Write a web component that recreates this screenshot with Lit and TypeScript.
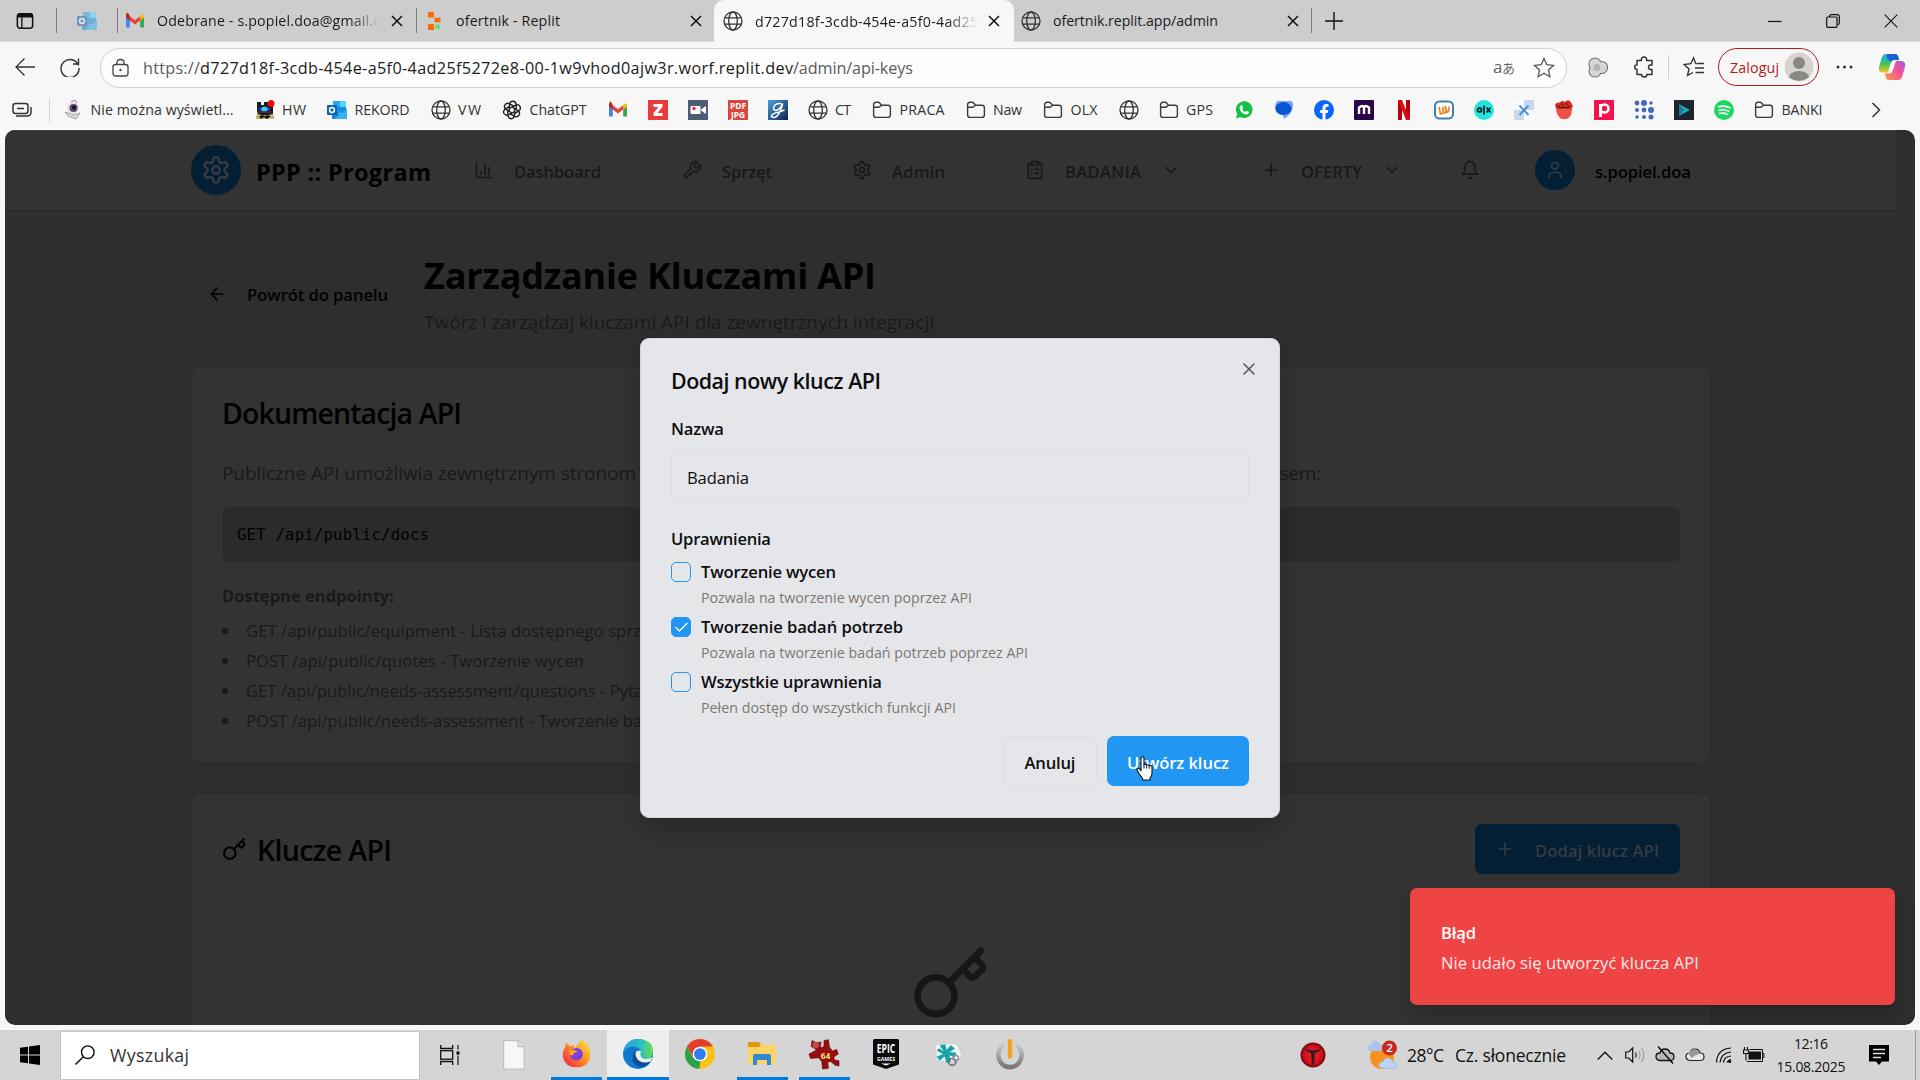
import { LitElement, html, css, svg, nothing } from "lit";
import { customElement, property } from "lit/decorators.js";

/* Single-line label whose tracking is adjusted so that it fills a given width. */
@customElement("fit-text")
class FitText extends LitElement {
  @property() t = "";
  @property({ type: Number }) w = 0;
  static styles = css`
    :host { display: inline-block; white-space: pre; flex: none; }
  `;
  render() {
    return html`<span>${this.t}</span>`;
  }
  updated() {
    this.style.width = `${this.w}px`;
    this.style.letterSpacing = "0px";
    const span = this.renderRoot.querySelector("span")!;
    const natural = span.getBoundingClientRect().width;
    const n = Math.max(1, this.t.length - 1);
    this.style.letterSpacing = `${((this.w - natural) / n).toFixed(4)}px`;
  }
}

const T = (t: string, w: number, cls = "") =>
  html`<fit-text class=${cls} .t=${t} .w=${w}></fit-text>`;

const line = (inner: unknown, size = 20, sw = 2) => html`
  <svg class="ic" width=${size} height=${size} viewBox="0 0 24 24" fill="none" stroke="currentColor"
    stroke-width=${sw} stroke-linecap="round" stroke-linejoin="round">${inner}</svg>`;
const pic = (inner: unknown, w = 20, h = w) => html`
  <svg class="ic" width=${w} height=${h} viewBox="0 0 20 20" preserveAspectRatio="none">${inner}</svg>`;

const P = {
  settings: svg`<path d="M12.22 2h-.44a2 2 0 0 0-2 2v.18a2 2 0 0 1-1 1.73l-.43.25a2 2 0 0 1-2 0l-.15-.08a2 2 0 0 0-2.73.73l-.22.38a2 2 0 0 0 .73 2.73l.15.1a2 2 0 0 1 1 1.72v.51a2 2 0 0 1-1 1.74l-.15.09a2 2 0 0 0-.73 2.73l.22.38a2 2 0 0 0 2.73.73l.15-.08a2 2 0 0 1 2 0l.43.25a2 2 0 0 1 1 1.73V20a2 2 0 0 0 2 2h.44a2 2 0 0 0 2-2v-.18a2 2 0 0 1 1-1.73l.43-.25a2 2 0 0 1 2 0l.15.08a2 2 0 0 0 2.73-.73l.22-.39a2 2 0 0 0-.73-2.73l-.15-.08a2 2 0 0 1-1-1.74v-.5a2 2 0 0 1 1-1.74l.15-.09a2 2 0 0 0 .73-2.73l-.22-.38a2 2 0 0 0-2.73-.73l-.15.08a2 2 0 0 1-2 0l-.43-.25a2 2 0 0 1-1-1.73V4a2 2 0 0 0-2-2z"/><circle cx="12" cy="12" r="3"/>`,
  chart: svg`<path d="M3 3v16a2 2 0 0 0 2 2h16M18 17V9M13 17V5M8 17v-3"/>`,
  wrench: svg`<path d="M14.7 6.3a1 1 0 0 0 0 1.4l1.6 1.6a1 1 0 0 0 1.4 0l3.77-3.77a6 6 0 0 1-7.94 7.94l-6.91 6.91a2.12 2.12 0 0 1-3-3l6.91-6.91a6 6 0 0 1 7.94-7.94l-3.76 3.76z"/>`,
  clip: svg`<rect x="8" y="2" width="8" height="4" rx="1"/><path d="M16 4h2a2 2 0 0 1 2 2v14a2 2 0 0 1-2 2H6a2 2 0 0 1-2-2V6a2 2 0 0 1 2-2h2M12 11h4M12 16h4M8 11h.01M8 16h.01"/>`,
  down: svg`<path d="m6 9 6 6 6-6"/>`,
  plus: svg`<path d="M5 12h14M12 5v14"/>`,
  bell: svg`<path d="M6 8a6 6 0 0 1 12 0c0 7 3 9 3 9H3s3-2 3-9M10.3 21a1.94 1.94 0 0 0 3.4 0"/>`,
  user: svg`<path d="M19 21v-2a4 4 0 0 0-4-4H9a4 4 0 0 0-4 4v2"/><circle cx="12" cy="7" r="4"/>`,
  back: svg`<path d="m12 19-7-7 7-7M19 12H5"/>`,
  key: svg`<path d="m15.5 7.5 2.3 2.3a1 1 0 0 0 1.4 0l2.1-2.1a1 1 0 0 0 0-1.4L19 4M21 2l-9.6 9.6"/><circle cx="7.5" cy="15.5" r="5.5"/>`,
  x: svg`<path d="M18 6 6 18M6 6l12 12"/>`,
  check: svg`<path d="M20 6 9 17l-5-5"/>`,
};

const globe = pic(svg`<g fill="none" stroke="#333" stroke-width="1.3"><circle cx="10" cy="10" r="9"/><ellipse cx="10" cy="10" rx="4.3" ry="9"/><path d="M1.8 6.8h16.4M1.8 13.2h16.4"/></g>`);
const folder = pic(svg`<path d="M1.6 5V15q0 2.4 2.4 2.4h12q2.4 0 2.4-2.4V7.600q0-2.400-2.400-2.400H9.600L7.600 3Q7 2.300 6 2.300H4Q1.600 2.300 1.600 5zM1.800 7.200H6.300Q7.300 7.200 8 6.500L9.500 5.200" fill="none" stroke="#3b3b3b" stroke-width="1.4"/>`);
const gmail = pic(svg`<path d="M1 4v12.500h3.800V8z" fill="#4285f4"/><path d="M15.200 8v8.500H19V4z" fill="#34a853"/><path d="M15.200 5.200V9.500L19 6.500V4.500q-1-2.500-3.800.7z" fill="#fbbc04"/><path d="M4.800 5.200V9.500L10 13.500l5.200-4V5.200L10 9.200z" fill="#ea4335"/><path d="M1 4.500v2l3.800 3V5.200Q2-2 1 4.500z" fill="#c5221f"/>`);
const outlook = pic(svg`<rect x="6" y="1" width="13" height="12" rx="1" fill="#1490df"/><rect x="12.500" y="1" width="6.500" height="6" fill="#50d9ff"/><rect x="6" y="1" width="6.500" height="6" fill="#28a8ea"/><path d="M5 9l8 5 7-5v9q0 1-1 1H6q-1 0-1-1z" fill="#1b7fd6"/><path d="M20 9v9q0 1-1 1H7z" fill="#37b4f0"/><rect x="0" y="5" width="10" height="10" rx="1" fill="#0a64b8"/><circle cx="5" cy="10" r="2.400" fill="none" stroke="#fff" stroke-width="1.500"/>`);
const word = (s: string, x: number, y: number, fs: number, fill: string, fw = 700) =>
  svg`<text x=${x} y=${y} font-size=${fs} fill=${fill} font-weight=${fw} text-anchor="middle" font-family="Open Sans, sans-serif">${s}</text>`;

const I = {
  camera: pic(svg`<path d="M2 12l9 3 6-2-4 6-8-3z" fill="#ddd" stroke="#888" stroke-width=".7"/><circle cx="10" cy="8" r="6" fill="#e4dfe6"/><circle cx="10.500" cy="8" r="4" fill="#5b4a66"/><circle cx="11" cy="7.500" r="2" fill="#1c1224"/><path d="M8 2l4-2 2 3" stroke="#d04f9a" fill="none"/>`),
  hw: pic(svg`<path d="M2 2h4v3h3V2h4v3h5v8l-1 3H3L2 11z" fill="#171c20"/><path d="M1 16l3-2 3 2 3-1 3 1 3-2 3 2v3H1z" fill="#c9b36a"/><path d="M4 16l2 3 3-2 3 2 4-3z" fill="#111"/><ellipse cx="9.500" cy="9" rx="6" ry="2" fill="#2c3bd0"/><ellipse cx="9.500" cy="9" rx="3" ry="2.500" fill="#26d5e8"/><path d="M3 12h13" stroke="#8a2a5b"/><circle cx="16" cy="3.500" r="3.500" fill="#fb0707"/>`),
  gpt: pic(svg`<g fill="none" stroke="#222" stroke-width="1.400">${[0, 60, 120, 180, 240, 300].map((a) => svg`<path transform="rotate(${a} 10 10)" d="M10 7l3-1.700q3.500-1.500 5 1.200 1.200 2.600-1 4.300L12.600 13.400V8.500"/>`)}</g>`),
  z: pic(svg`<rect width="20" height="20" fill="#e93a3c"/><path d="M5.500 4h9v3l-5 6h5v3h-9v-3l5-6h-5z" fill="#fff"/>`),
  cam: pic(svg`<rect width="20" height="20" fill="#4d5a78"/><rect x="2.500" y="6" width="10" height="8" rx="1" fill="#fff"/><path d="M13 9.500l5-3.500v8l-5-3.500z" fill="#fff"/><circle cx="6" cy="8.500" r="1.800" fill="#e33"/>`),
  pdf: pic(svg`<rect width="20" height="20" fill="#d8463c"/>${word("PDF", 10, 8.6, 8.4, "#fff")}${word("JPG", 10, 18, 8.4, "#fff")}`),
  g: pic(svg`<defs><linearGradient id="gg" x2="1" y2="1"><stop stop-color="#4ba0e0"/><stop offset="1" stop-color="#0c2350"/></linearGradient></defs><rect width="20" height="20" fill="url(#gg)"/><path d="M15 4.500Q10 2 6.500 5.500q-2.500 5 1.500 5Q12 9.500 14.500 4q-2 9-6 12.500-3 2-5 0 0-3 7.500-4.500l5.500-2" fill="none" stroke="#fff" stroke-width="1.600"/>`),
  wa: pic(svg`<path d="M2 18.500l1.200-4.500A8.300 8.300 0 1 1 6.500 17z" fill="#12c143"/><path d="M6.500 5.500l1.500-.5 1.200 2.800-1 1.200q1 2.300 3.200 3l1.200-1.200 2.400 1.300q0 2.400-2.600 2.400-6.400-1-6.900-7z" fill="#fff"/>`),
  msg: pic(svg`<path d="M4 1h13q2.500 1 2 5-.5 8-9 13-1-3-1.500-4Q1 14 1 7 1 2 4 1z" fill="#7aa2f7"/><ellipse cx="9.500" cy="8.500" rx="8" ry="6.500" fill="#0957d0"/>`),
  fb: pic(svg`<circle cx="10" cy="10" r="10" fill="#0866ff"/><path d="M8.500 20v-7H6.200v-3h2.300V8Q8.500 4 12.500 4h2v2.800H13q-1.500 0-1.500 1.500V10h2.800l-.5 3h-2.300v7z" fill="#fff"/>`),
  m: pic(svg`<rect width="20" height="20" rx="1" fill="#2b0548"/><path d="M5 14V7.500Q10 4 10 9v5M10 9q0-5 5-1.500V14" fill="none" stroke="#fff" stroke-width="2.400"/>`),
  n: pic(svg`<path d="M4 0h4v20H4zM12 0h4v20h-4z" fill="#b1060f"/><path d="M4 0h4l8 20h-4z" fill="#e50914"/>`),
  w: pic(svg`<rect x="1" y="1.500" width="18" height="17" rx="4.500" fill="#fff" stroke="#3f7fb2" stroke-width="2"/><path d="M5 7l1.500 7 3-1-1-6 1.200 6 3-1L11 6l1.500 6.500q3-1 2.500-6" fill="none" stroke="#f0811e" stroke-width="1.700"/>`),
  olx: pic(svg`<circle cx="10" cy="10" r="10" fill="#23e5db"/><circle cx="5.500" cy="10" r="2" fill="none" stroke="#012a30" stroke-width="1.800"/><path d="M10 5.500v9M12.500 7.500l4 5M16.500 7.500l-4 5" stroke="#012a30" stroke-width="1.800"/>`),
  xx: pic(svg`<rect width="20" height="20" fill="#fff"/><path d="M0 0h10v10H0zM10 10h10v10H10z" fill="#f9fbff"/><path d="M10 0h10v10H10zM0 10h10v10H0z" fill="#c8d8ec"/><path d="M5.500 5.500l9 9.500M14.500 5.500l-9 9.500" stroke="#4b8fe0" stroke-width="2"/>`),
  fruit: pic(svg`<path d="M1 6q0-4 5-3.500 2-2.500 5-.5 2-3 5-1l3 5-2 4H3z" fill="#d52d1d"/><path d="M2 9h16q0 8-5.500 10H8Q3 17 2 9z" fill="#ef5045"/><path d="M4 6q3 3 6 1 3 2 6-1M7 3.500l2 2M12 3l1 2" stroke="#471a10" stroke-width="1.100" fill="none"/>`),
  p: pic(svg`<rect width="20" height="20" fill="#f7104f"/><path d="M6.500 17V4" stroke="#fff" stroke-width="3"/><circle cx="10.500" cy="8.500" r="4" fill="none" stroke="#fff" stroke-width="2.600"/>`),
  dots: pic(svg`<g fill="#4666bd">${[[3, 3, 2.4], [10, 3, 3], [17, 3, 1.7], [3, 10, 2], [10, 10, 2.4], [17, 10, 3], [3, 17, 1.7], [10, 17, 2], [17, 17, 2.5]].map(([x, y, r]) => svg`<circle cx=${x} cy=${y} r=${r}/>`)}</g>`),
  play: pic(svg`<rect width="20" height="20" fill="#1f242a"/><path d="M5 4v12l11-6z" fill="#1fa7c4"/><path d="M5 4v12l5-6z" fill="#177a98"/>`),
  sp: pic(svg`<circle cx="10" cy="10" r="10" fill="#1ed760"/><path d="M4.500 6.800q6-1.800 11.500 1M5 10.300q5-1.400 9.800 1M5.500 13.500q4.500-1 8 1" stroke="#fff" stroke-width="1.600" fill="none" stroke-linecap="round"/>`),
};

const marks: [unknown, string?, number?][] = [
  [I.camera, "Nie można wyświetl...", 143], [I.hw, "HW", 24], [outlook, "REKORD", 55], [globe, "VW", 23],
  [I.gpt, "ChatGPT", 57], [gmail], [I.z], [I.cam], [I.pdf], [I.g], [globe, "CT", 16], [folder, "PRACA", 45],
  [folder, "Naw", 29], [folder, "OLX", 27], [globe], [folder, "GPS", 27], [I.wa], [I.msg], [I.fb], [I.m], [I.n], [I.w],
  [I.olx], [I.xx], [I.fruit], [I.p], [I.dots], [I.play], [I.sp], [folder, "BANKI", 41],
];

const tabX = html`<svg class="ic" width="12" height="12" viewBox="0 0 12 12"><path d="M1 1l10 10M11 1L1 11" stroke="#111" stroke-width="1.500"/></svg>`;

@customElement("browser-chrome")
class BrowserChrome extends LitElement {
  static styles = css`
    :host { display: block; height: 130px; background: #f7f7f7; color: #1b1b1b; }
    .ic { display: block; flex: none; }
    .tabs { height: 42px; background: #cdcdcd; display: flex; align-items: center; font-size: 14.200px; border-bottom: 1px solid #dedede; box-sizing: border-box; }
    .tabs > * { flex: none; }
    .tabs fit-text { margin-top: -3px; }
    .vs { width: 1px; height: 25px; background: #7d7d7d; }
    .lead { width: 56px; display: flex; padding-left: 16px; box-sizing: border-box; }
    .pin { width: 60px; display: flex; justify-content: center; opacity: .5; }
    .tab { display: flex; align-items: center; box-sizing: border-box; height: 42px; }
    .t1 { width: 298px; padding-left: 7px; }
    .t2 { width: 297px; padding-left: 7px; }
    .t3 { width: 300px; padding-left: 9px; background: #f7f7f7; border-radius: 10px 10px 0 0; margin-bottom: -1px; }
    .t4 { width: 297px; padding-left: 7px; }
    .lbl { display: block; margin-left: 12px; overflow: hidden; }
    .fade { -webkit-mask-image: linear-gradient(90deg, #000 86%, transparent 100%); }
    .sp { flex: 1; }
    .plus { margin-left: 13px; }
    .wins { display: flex; margin-left: auto; gap: 44px; padding-right: 22px; align-items: center; }
    .bar { height: 50px; display: flex; align-items: center; }
    .bar > * { flex: none; }
    .nav { display: flex; gap: 25px; padding-left: 15px; width: 100px; box-sizing: border-box; align-items: center; }
    .addr { width: 1467px; height: 40px; box-sizing: border-box; border: 1px solid #cfcfcf; border-radius: 20px; background: #fdfdfd; display: flex; align-items: center; padding: 0 11px 0 11px; font-size: 16.200px; color: #5b5b5b; margin-top: 1px; }
    .url { display: flex; margin-left: 14px; }
    .host { color: #1b1b1b; }
    .tr { margin-left: auto; margin-right: 18px; font: 17px "Open Sans", "Noto Sans CJK JP", sans-serif; letter-spacing: -.5px; color: #666; width: 22px; white-space: nowrap; display: flex; align-items: center; line-height: 20px; padding-bottom: 2px; }
    .jp { font-size: 13px; padding-top: 2px; }
    .login { width: 101px; height: 38px; box-sizing: border-box; border: 1.500px solid #b3191d; border-radius: 20px; display: flex; align-items: center; justify-content: space-between; padding: 0 4px 0 11px; color: #b3191d; font-size: 14.200px; margin-left: 14px; }
    .vsep { width: 1px; height: 24px; background: #cfcfcf; }
    .marks { height: 38px; display: flex; align-items: center; font-size: 14.200px; color: #333; padding-left: 12px; padding-bottom: 2px; box-sizing: border-box; }
    .list { display: flex; gap: 20px; margin-left: 13px; }
    .mk { display: flex; align-items: center; gap: 7.500px; height: 22px; }
    .mk fit-text { margin-right: 1px; padding-bottom: 1px; }
    .msep { width: 1px; height: 24px; background: #d2d2d2; margin-left: 17px; }
    .more { margin-left: 47px; }
  `;
  render() {
    return html`
      <div class="tabs">
        <div class="lead">${pic(svg`<rect x="1.500" y="2" width="17" height="16" rx="3" fill="none" stroke="#111" stroke-width="1.700"/><path d="M1.500 6V4q0-2.500 2.500-2.500h12q2.500 0 2.500 2.500v2z" fill="#111"/><path d="M6.500 6v12" stroke="#111" stroke-width="1.500"/>`, 18)}</div>
        <div class="vs"></div>
        <div class="pin">${outlook}</div>
        <div class="vs"></div>
        <div class="tab t1">${gmail}<div class="lbl fade">${T("Odebrane - s.popiel.doa@gmail.c", 223)}</div><div class="sp"></div>${tabX}<svg class="ic" width="13" height="1"></svg></div>
        <div class="vs"></div>
        <div class="tab t2">${pic(svg`<path d="M4 1h6v5.500H4zM4 13h6v6H4z" fill="#fb6a0a"/><path d="M10.500 6.800h6v4.500h-6z" fill="#fb6a0a"/><circle cx="13.500" cy="15.500" r="2.600" fill="#67dd7c"/>`, 20)}<div class="lbl">${T("ofertnik - Replit", 104)}</div><div class="sp"></div>${tabX}<svg class="ic" width="12" height="1"></svg></div>
        <div class="tab t3">${globe}<div class="lbl fade">${T("d727d18f-3cdb-454e-a5f0-4ad25", 223)}</div><div class="sp"></div>${tabX}<svg class="ic" width="14" height="1"></svg></div>
        <div class="tab t4">${globe}<div class="lbl">${T("ofertnik.replit.app/admin", 165)}</div><div class="sp"></div>${tabX}<svg class="ic" width="12" height="1"></svg></div>
        <div class="vs"></div>
        <svg class="ic plus" width="18" height="18" viewBox="0 0 18 18"><path d="M9 0v18M0 9h18" stroke="#111" stroke-width="1.400"/></svg>
        <div class="wins">
          <svg class="ic" width="14" height="14" viewBox="0 0 14 14"><path d="M0 7.500h13.500" stroke="#111" stroke-width="1.200"/></svg>
          <svg class="ic" width="14" height="14" viewBox="0 0 14 14"><path d="M3.500 3V2.500Q3.500.7 5.500.7H11q2.300 0 2.300 2.300v6q0 1.500-1.500 1.700" fill="none" stroke="#111" stroke-width="1.200"/><rect x=".7" y="3" width="10.300" height="10.300" rx="1" fill="none" stroke="#111" stroke-width="1.200"/></svg>
          <svg class="ic" width="14" height="14" viewBox="0 0 14 14"><path d="M.7.700l12.600 12.600M13.300.700L.7 13.300" stroke="#111" stroke-width="1.100"/></svg>
        </div>
      </div>
      <div class="bar">
        <div class="nav">
          <svg class="ic" width="20" height="20" viewBox="0 0 20 20"><path d="M9.500 1.500L1 10l8.500 8.500M1 10h19" stroke="#333" stroke-width="1.300" fill="none"/></svg>
          <svg class="ic" width="20" height="20" viewBox="0 0 20 20"><path d="M18.500 8.500A9 9 0 1 0 19 11M18.500 1.500V7H13" stroke="#333" stroke-width="1.400" fill="none"/></svg>
        </div>
        <div class="addr">
          <svg class="ic" width="17" height="20" viewBox="0 0 17 20"><rect x="1" y="6.500" width="15" height="11.500" rx="2.500" fill="none" stroke="#444" stroke-width="1.300"/><path d="M5 6.500V4.500Q5 1.500 8.500 1.500T12 4.500v2" fill="none" stroke="#444" stroke-width="1.300"/><circle cx="8.500" cy="12" r="1.200" fill="#444"/></svg>
          <div class="url">${T("https://", 57)}${T("d727d18f-3cdb-454e-a5f0-4ad25f5272e8-00-1w9vhod0ajw3r.worf.replit.dev", 593, "host")}${T("/admin/api-keys", 120)}</div>
          <div class="tr">a<span class="jp">あ</span></div>
          <svg class="ic" width="22" height="22" viewBox="0 0 22 22"><path d="M11 1.500l2.800 6.200 6.700.7-5 4.600 1.400 6.700L11 16.300l-5.900 3.400L6.500 13l-5-4.600 6.700-.7z" fill="none" stroke="#555" stroke-width="1.300"/></svg>
        </div>
        <svg class="ic" width="21" height="1"></svg>
        <svg class="ic" width="20" height="21" viewBox="0 0 20 21"><g fill="#c4c4c4" stroke="#777" stroke-width="2.200"><circle cx="7" cy="7" r="5.500"/><circle cx="7" cy="14" r="5.500"/><circle cx="13.500" cy="10.500" r="5.500"/></g><g fill="#d6d6d6"><circle cx="7" cy="7" r="5.500"/><circle cx="7" cy="14" r="5.500"/><circle cx="13.500" cy="10.500" r="5.500"/></g><circle cx="9" cy="10.500" r="3.500" fill="#b4b4b4"/></svg>
        <svg class="ic" width="26" height="1"></svg>
        <svg class="ic" width="21" height="22" viewBox="0 0 21 22"><path d="M3 4.500h4.500Q7 1 10 1t2.600 3.500H18V9q-3.500-.6-3.500 2.200T18 13.500V18.500h-5.300Q13 21 10.300 21T7.600 18.500H3v-5Q.7 13.500.7 11T3 9z" fill="none" stroke="#333" stroke-width="1.500" stroke-linejoin="round"/></svg>
        <svg class="ic" width="13" height="1"></svg>
        <div class="vsep"></div>
        <svg class="ic" width="14" height="1"></svg>
        <svg class="ic" width="21" height="22" viewBox="0 0 21 22"><path d="M13 8l-2.500-6L7.800 7.700 1 8.500l5 4.600L4.500 19.500l5.500-3" fill="none" stroke="#333" stroke-width="1.400"/><path d="M13.500 7.500H21M12 12h9M12.500 16.500H21" stroke="#333" stroke-width="1.400"/></svg>
        <div class="login">${T("Zaloguj", 49)}<svg class="ic" width="30" height="30" viewBox="0 0 30 30"><circle cx="15" cy="15" r="14.500" fill="#d6d4d1"/><circle cx="15" cy="11" r="6" fill="#8b8783"/><path d="M5 25.500Q6 19 15 19t10 6.500Q15 32 5 25.500z" fill="#8b8783"/></svg></div>
        <svg class="ic" width="17" height="1"></svg>
        <svg class="ic" width="17" height="4" viewBox="0 0 17 4"><g fill="#333"><circle cx="2" cy="2" r="1.500"/><circle cx="8.500" cy="2" r="1.500"/><circle cx="15" cy="2" r="1.500"/></g></svg>
        <svg class="ic" width="25" height="1"></svg>
        <svg class="ic" width="28" height="28" viewBox="0 0 28 28">
          <defs><linearGradient id="ca" x2="0" y2="1"><stop stop-color="#1bb0e8"/><stop offset=".5" stop-color="#3bbf6b"/><stop offset="1" stop-color="#f8c817"/></linearGradient>
          <linearGradient id="cb" x1="1" x2="0" y2="1"><stop stop-color="#a955e8"/><stop offset=".5" stop-color="#f4578f"/><stop offset="1" stop-color="#ff9d3c"/></linearGradient></defs>
          <path d="M8 1h9q2.500 0 3.300 3L21 7h-5q-2.500 0-3.300 3L10 19.500H4.500Q0 19.500 1 14L4 4Q5 1 8 1z" fill="url(#ca)"/>
          <path d="M9 1h8q2.500 0 3.300 3L21 7h-5q-2 0-3 2L9 5z" fill="#1a5fd8"/>
          <path d="M20 27h-9q-2.500 0-3.300-3L7 20.500h4.500q2.500 0 3.300-3L18 8h5.500Q28 8 27 14L24 24q-1 3-4 3z" fill="url(#cb)"/>
        </svg>
      </div>
      <div class="marks">
        <svg class="ic" width="20" height="16" viewBox="0 0 20 16"><rect x="1" y="1.500" width="15" height="10" rx="2.500" fill="none" stroke="#333" stroke-width="1.500"/><path d="M5 6.500h7M4 14h11q4 0 4-4V5" stroke="#333" stroke-width="1.500" fill="none"/></svg>
        <div class="msep"></div>
        <div class="list">${marks.map(([i, t, w]) => html`<div class="mk">${i}${t ? T(t, w!) : nothing}</div>`)}</div>
        <svg class="ic more" width="10" height="16" viewBox="0 0 10 16"><path d="M1.500 1l7 7-7 7" fill="none" stroke="#333" stroke-width="1.500"/></svg>
      </div>`;
  }
}

@customElement("admin-page")
class AdminPage extends LitElement {
  static styles = css`
    :host { display: block; position: relative; margin: 0 5px; height: 895px; background: #2e2e2e; border-radius: 10px; overflow: hidden; color: #010101; font-size: 16.600px; }
    .ic { display: block; flex: none; }
    header { width: 1891px; height: 81px; box-sizing: border-box; background: #333; border-bottom: 1px solid #292929; border-top: 1px solid #444; display: flex; align-items: center; padding: 0 0 1px 186px; color: #191817; }
    header > * { flex: none; }
    .disc { border-radius: 50%; background: #041e33; color: #333c44; display: grid; place-items: center; }
    .logo { width: 50px; height: 50px; }
    .ava { width: 40px; height: 40px; margin-left: 55px; }
    .brand { font-size: 23.500px; font-weight: 700; margin: 4px 43px 0 15px; color: #010101; }
    .nav { display: flex; align-items: center; gap: 20px; margin-right: 80px; font-weight: 600; }
    .nav fit-text, .who { padding-top: 3px; }
    .n1 { margin-right: 81px; }
    .last { margin-right: 58px; }
    .who { margin-left: 20px; color: #010101; font-weight: 600; }
    .head { display: flex; padding: 40px 0 0 201px; height: 155px; box-sizing: border-box; }
    .ret { display: flex; align-items: center; gap: 20px; height: 86px; font-weight: 600; width: 218px; }
    .ret .ic { margin-left: 1px; }
    h1 { margin: 0; font-size: 36px; line-height: 50px; font-weight: 700; }
    .sub { margin-top: 1px; font-size: 19px; line-height: 40px; color: #1b1918; }
    .ret + div { display: flex; flex-direction: column; }
    .card { margin-left: 186px; width: 1520px; box-sizing: border-box; border: 1px solid #2b2b2b; border-radius: 10px; background: #333; padding: 0 30px; }
    .c1 { height: 397px; padding-top: 26px; color: #1b1918; }
    .c2 { height: 300px; margin-top: 30px; padding-top: 30px; }
    h2 { margin: 0; font-size: 28.500px; line-height: 40px; font-weight: 600; color: #010101; }
    .kt h2 { padding-top: 1px; }
    .para { display: flex; margin-top: 25px; font-size: 19px; line-height: 30px; height: 30px; justify-content: space-between; padding-right: 359px; }
    .code { margin-top: 19px; height: 55px; border-radius: 8px; background: #292b2d; color: #010101; font: 15.800px/55px "DejaVu Sans Mono", monospace; padding-left: 15px; }
    .b { margin-top: 19px; line-height: 30px; height: 30px; font-weight: 700; }
    .eps { margin-top: 5px; }
    .ep { display: flex; align-items: center; height: 30px; line-height: 30px; width: 440px; white-space: pre; }
    .dot { width: 6px; height: 6px; border-radius: 50%; background: #1b1918; margin-right: 18px; flex: none; }
    .row { display: flex; justify-content: space-between; align-items: center; height: 50px; }
    .kt { display: flex; align-items: center; gap: 10px; }
    .add { width: 205px; height: 50px; box-sizing: border-box; border-radius: 7px; background: #041e33; color: #343c42; display: flex; align-items: center; gap: 20px; padding-left: 20px; font-weight: 600; }
    .add fit-text { padding-top: 3px; }
    .empty { display: flex; justify-content: center; margin-top: 70px; color: #171615; }

    .dlg { position: absolute; left: 635px; top: 208px; width: 640px; height: 480px; box-sizing: border-box; border: 1px solid #d3d6dc; border-radius: 9px; background: #e5e6ea; padding: 28px 30px 0; color: #0e0e0f; box-shadow: 0 12px 24px rgba(0, 0, 0, .22); }
    .dh { display: flex; justify-content: space-between; }
    .dt { font-size: 21.400px; line-height: 28px; font-weight: 600; height: 28px; }
    .x { color: #555; margin: -8px -10px 0 0; height: 20px; }
    .l { display: block; height: 24px; line-height: 24px; font-weight: 600; }
    .l1 { margin-top: 22px; }
    .l2 { margin-top: 26px; }
    .inp { margin-top: 10px; height: 50px; box-sizing: border-box; border: 1px solid #dcdfe4; border-radius: 7px; display: flex; align-items: center; padding: 3px 0 0 15px; }
    .opts { margin-top: 9px; }
    .opt { display: grid; grid-template-columns: 20px 1fr; column-gap: 10px; row-gap: 4px; margin-bottom: 7px; align-items: center; }
    .cb { width: 20px; height: 20px; box-sizing: border-box; border: 1px solid #2196f3; border-radius: 5px; display: grid; place-items: center; color: #fff; }
    .on { background: #2196f3; }
    .d { grid-column: 2; font-size: 14.200px; line-height: 20px; height: 20px; color: #7c7874; }
    .btns { display: flex; justify-content: flex-end; gap: 10px; margin-top: 18px; }
    .btn { height: 50px; box-sizing: border-box; border-radius: 7px; display: flex; align-items: center; justify-content: center; padding-top: 3px; }
    .no { width: 94px; border: 1px solid #dcdfe4; font-weight: 600; }
    .ok { width: 142px; background: #2196f3; color: #fff; font-weight: 600; }
    .cursor { position: absolute; left: 1131px; top: 626px; }
    .toast { position: absolute; left: 1405px; top: 758px; width: 485px; height: 117px; box-sizing: border-box; border-radius: 7px; background: #ef4444; padding: 30px 0 0 31px; display: flex; flex-direction: column; color: #fff; line-height: 30px; box-shadow: 0 10px 20px rgba(0, 0, 0, .2); }
    .tb { font-weight: 600; height: 30px; }
    .tm { color: #fde9e9; }
  `;
  opt(label: string, w: number, desc: string, dw: number, on = false) {
    return html`<div class="opt"><div class=${on ? "cb on" : "cb"}>${on ? line(P.check, 17, 1.8) : nothing}</div>${T(label, w, "l")}${T(desc, dw, "d")}</div>`;
  }
  ep(t: string, w: number, rest = "") {
    return html`<div class="ep"><div class="dot"></div>${T(t, w)}${rest}</div>`;
  }
  render() {
    return html`
      <header>
        <div class="disc logo">${line(P.settings, 30)}</div>
        ${T("PPP :: Program", 175, "brand")}
        <div class="nav n1">${line(P.chart)}${T("Dashboard", 87)}</div>
        <div class="nav">${line(P.wrench)}${T("Sprzęt", 50)}</div>
        <div class="nav">${line(P.settings)}${T("Admin", 53)}</div>
        <div class="nav">${line(P.clip)}${T("BADANIA", 76)}${line(P.down)}</div>
        <div class="nav last">${line(P.plus)}${T("OFERTY", 61)}${line(P.down)}</div>
        ${line(P.bell)}
        <div class="disc ava">${line(P.user)}</div>
        ${T("s.popiel.doa", 96, "who")}
      </header>
      <div class="head">
        <div class="ret">${line(P.back)}${T("Powrót do panelu", 141)}</div>
        <div><h1>${T("Zarządzanie Kluczami API", 452)}</h1>${T("Twórz i zarządzaj kluczami API dla zewnętrznych integracji", 510, "sub")}</div>
      </div>
      <section class="card c1">
        <h2>${T("Dokumentacja API", 240)}</h2>
        <div class="para">${T("Publiczne API umożliwia zewnętrznym stronom", 414)}${T("sem:", 41)}</div>
        <div class="code">${T("GET /api/public/docs", 192)}</div>
        <div class="b">${T("Dostępne endpointy:", 172)}</div>
        <div class="eps">
          ${this.ep("GET /api/public/equipment - Lista dostępnego sprz", 395, "ętu")}
          ${this.ep("POST /api/public/quotes - Tworzenie wycen", 338)}
          ${this.ep("GET /api/public/needs-assessment/questions - Pyt", 388, "ania")}
          ${this.ep("POST /api/public/needs-assessment - Tworzenie b", 387, "adania")}
        </div>
      </section>
      <section class="card c2">
        <div class="row">
          <div class="kt">${line(P.key, 25)}<h2>${T("Klucze API", 135)}</h2></div>
          <div class="add">${line(P.plus)}${T("Dodaj klucz API", 124)}</div>
        </div>
        <div class="empty">${line(P.key, 80)}</div>
      </section>
      <div class="dlg">
        <div class="dh">${T("Dodaj nowy klucz API", 210, "dt")}<div class="x">${line(P.x, 20, 1.8)}</div></div>
        ${T("Nazwa", 53, "l l1")}
        <div class="inp">${T("Badania", 62)}</div>
        ${T("Uprawnienia", 100, "l l2")}
        <div class="opts">
          ${this.opt("Tworzenie wycen", 135, "Pozwala na tworzenie wycen poprzez API", 271)}
          ${this.opt("Tworzenie badań potrzeb", 202, "Pozwala na tworzenie badań potrzeb poprzez API", 327, true)}
          ${this.opt("Wszystkie uprawnienia", 181, "Pełen dostęp do wszystkich funkcji API", 255)}
        </div>
        <div class="btns"><div class="btn no">${T("Anuluj", 51)}</div><div class="btn ok">${T("Utwórz klucz", 102)}</div></div>
      </div>
      <div class="toast">${T("Błąd", 35, "tb")}${T("Nie udało się utworzyć klucza API", 258, "tm")}</div>
      <svg class="cursor" width="18" height="25" viewBox="0 0 18 25"><path d="M5 2.500q0-1.700 1.500-1.700T8 2.500V8.500q1.300-1 2.500.5 1.500-.8 2.500.6 1.800-.8 3 1V17q0 3-2 5v2H6.500v-1.500L3 17.500 1 14q-.3-2 1.700-1.600L5 14.500z" fill="#fff" stroke="#111" stroke-width="1.100"/><path d="M8 8.500v4M10.600 9.500v3M13.200 10.200v2.500" stroke="#111"/></svg>
    `;
  }
}

@customElement("task-bar")
class TaskBar extends LitElement {
  static styles = css`
    :host { display: flex; align-items: center; margin-top: 5px; height: 50px; background: #d5d5d5; color: #111; }
    .ic { display: block; flex: none; overflow: visible; }
    .start { width: 60px; display: flex; padding-left: 20px; box-sizing: border-box; }
    .search { width: 360px; height: 49px; box-sizing: border-box; background: #fff; border: 1px solid #c4c4c4; display: flex; align-items: center; padding-left: 14px; gap: 15px; font-size: 17.800px; color: #333; }
    .tv { margin-left: 20px; }
    .doc { margin: 0 20px 0 43px; }
    .app { width: 62px; height: 50px; box-sizing: border-box; display: grid; place-items: center; border-bottom: 3px solid transparent; flex: none; }
    .app.run { border: 0; background: linear-gradient(#0078d7, #0078d7) center bottom / 51px 3px no-repeat; padding-bottom: 3px; }
    .app.cur { border-bottom-color: #0078d7; background: #eee; }
    .tray { display: flex; align-items: center; margin-left: auto; height: 50px; }
    .tray > * { flex: none; }
    .wx { margin: 0 10px 0 41px; }
    .temp { font-size: 17.500px; display: flex; gap: 11px; }
    .clk { display: flex; flex-direction: column; align-items: center; width: 70px; margin: 0 23px 0 12px; font-size: 14px; line-height: 23px; }
    .edge { width: 1px; height: 50px; background: #999; margin: 0 4px 0 26px; }
    .s2 { margin-left: 12px; }
    .s3 { margin-left: 10px; }
  `;
  render() {
    return html`
      <div class="start">${pic(svg`<path d="M0 2.800L8 1.700V9.500H0zM9 1.500L20 0v9.500H9zM0 10.500h8v7.800L0 17.200zM9 10.500h11V20L9 18.500z"/>`)}</div>
      <div class="search"><svg class="ic" width="20" height="20" viewBox="0 0 20 20"><circle cx="12.800" cy="7.200" r="6.300" fill="none" stroke="#111" stroke-width="1.400"/><path d="M8.300 11.700L.5 19.500" stroke="#111" stroke-width="1.500"/></svg>${T("Wyszukaj", 79)}</div>
      <svg class="ic tv" width="20" height="20" viewBox="0 0 20 20"><path d="M.7 0v3.500h12V0M.7 20v-3.500h12V20" fill="none" stroke="#111" stroke-width="1.300"/><rect x=".7" y="5.700" width="12" height="8.500" fill="none" stroke="#111" stroke-width="1.300"/><path d="M18 0v20" stroke="#111" stroke-width="1.200"/><path d="M17 4.500h2v2h-2zM17 9.500h2v1h-2z" fill="#d5d5d5"/><rect x="16.500" y="6.500" width="3" height="3" fill="#111"/></svg>
      <svg class="ic doc" width="22" height="30" viewBox="0 0 22 30"><path d="M.7.700h14.500l6 6v22.500H.7z" fill="#f5f7f8" stroke="#b9b9b9"/><path d="M15 .7v6h6" fill="#e2e2e2" stroke="#b5b5b5"/></svg>
      <div class="app run">${pic(svg`<defs><linearGradient id="ff" x1="1" x2="0" y2="1"><stop stop-color="#fff14a"/><stop offset=".5" stop-color="#ff8a1e"/><stop offset="1" stop-color="#f5125a"/></linearGradient></defs><path d="M2 6L3 2.500 5.500 5l3-1L8 7l4-4.500L13 0l3.500 3 1.500 1.500Q20 8 19.500 12 18 19.500 10 19.500T.5 12Q.5 8 2 6z" fill="url(#ff)"/><circle cx="10" cy="10.500" r="4.300" fill="#7a3fe0"/><path d="M5 8.500q3-2 6 .5-3 0-3.500 2.500Q5 11 5 8.500z" fill="#ffa62b"/>`, 29)}</div>
      <div class="app cur">${pic(svg`<defs><linearGradient id="eg"><stop stop-color="#2b9fe0"/><stop offset=".6" stop-color="#2dc0c0"/><stop offset="1" stop-color="#66e04a"/></linearGradient></defs><circle cx="10" cy="10" r="10" fill="#0f78cf"/><path d="M.2 9Q1.500 0 10.500 0 20 .8 20 8q0 5.500-5.500 5.500-4-.5-2.500-3Q13 5.500 7 5 2 5 .2 9z" fill="url(#eg)"/><path d="M8 8q-4 6 1.500 10Q14 20.500 18.800 14.700 15.500 16.500 12 15 8 13 8 8z" fill="#0b4f96"/><path d="M8.500 9q1.500-2.500 3.700-.5-1.200 2 .3 4 3 2 7-.5L18.500 15Q11.500 17 9 12.500 8 10.500 8.500 9z" fill="#eee"/>`, 30)}</div>
      <div class="app">${pic(svg`<circle cx="10" cy="10" r="10" fill="#fbc116"/><path d="M1.300 5A10 10 0 0 1 18.700 5H10L6 12.500z" fill="#e33b2e"/><path d="M1.300 5l4.500 8 4.500 2L9.500 20A10 10 0 0 1 1.300 5z" fill="#2ba24c"/><circle cx="10" cy="10" r="4.900" fill="#fff"/><circle cx="10" cy="10" r="3.900" fill="#2f7df0"/>`, 30)}</div>
      <div class="app run"><svg class="ic" width="28" height="24" viewBox="0 0 28 24"><path d="M0 1q0-1 1-1h10l2 3v4H0z" fill="#dd9c05"/><path d="M0 5h11l2-2h15v19H0z" fill="#fdd367"/><path d="M5 23V14q0-2 2-2h14q2 0 2 2v9h-4v-5H9v5z" fill="#2f8ad2"/></svg></div>
      <div class="app run">${pic(svg`<path d="M2 1l3 1.500L8 2l-.5 4L10 5V1l3-.5.500 4.500 2 3 3-1 1 3-3 2 .5 2 3 .5v3.500l-2.500-.5-3-2.500-2 .5.500 4-4 .500-.5-5-2-2.500L1 13l-1-3 3-1.500 2-1.500L1.500 5z" fill="#970d10" stroke="#600" stroke-width=".4"/><circle cx="4.500" cy="4" r="2.200" fill="#c6484a"/>${word("64", 11, 13, 5.5, "#ffe477")}`, 30)}</div>
      <div class="app"><svg class="ic" width="26" height="30" viewBox="0 0 26 30"><path d="M1.500 0h23Q26 0 26 1.500V25.500L13 30 0 25.500V1.500Q0 0 1.500 0z" fill="#0b0b0b"/><path d="M8 24.500h10l-5 2z" fill="#fff"/><text transform="scale(.72 1)" x="18" y="14.500" font-size="12" font-weight="700" fill="#fff" text-anchor="middle" font-family="Open Sans, sans-serif">EPIC</text><text x="13" y="21.500" font-size="5.200" font-weight="700" fill="#fff" text-anchor="middle" font-family="Open Sans, sans-serif">GAMES</text></svg></div>
      <div class="app">${pic(svg`<path d="M1 3l13-1 3 1 3 9-5 4-13-1z" fill="#f5f5f5" stroke="#c7c7c7" stroke-width=".5"/><path d="M7 8L4 3.500l4-1L9 7l3-4 3 3-4 2.500 5 .5-1 3.500-4-1.500 1 5-3 1-1.500-5L4 15l-2-3 4.500-2L2 7.500l1.500-2z" fill="#14a3a8"/><circle cx="13" cy="16" r="2.600" fill="none" stroke="#6b6f73" stroke-width="1.200"/><circle cx="15.500" cy="13" r="2" fill="none" stroke="#8b8f93"/>`, 28, 26)}</div>
      <div class="app">${pic(svg`<defs><linearGradient id="pw" x2="0" y2="1"><stop stop-color="#ccc"/><stop offset="1" stop-color="#777"/></linearGradient></defs><path d="M6 3.800A8.300 8.300 0 1 0 14 3.800" fill="none" stroke="url(#pw)" stroke-width="3.200"/><rect x="8.400" y="0" width="3.200" height="13.500" rx="1.500" fill="#f7a21d"/>`, 28, 29)}</div>
      <div class="tray">
        <svg class="ic" width="26" height="26" viewBox="0 0 26 26"><defs><radialGradient id="rd"><stop stop-color="#e9222d"/><stop offset=".7" stop-color="#d0101c"/><stop offset="1" stop-color="#6d0810"/></radialGradient></defs><circle cx="13" cy="13" r="12.500" fill="url(#rd)"/><path d="M4.500 6q4 2.500 8.500 2.500T21.500 6q-2 4-6.500 5L14 22.500h-2L11 11Q6.500 10 4.500 6z" fill="#3a1a22"/></svg>
        <svg class="ic wx" width="30" height="30" viewBox="0 0 30 30"><circle cx="15" cy="17" r="12" fill="#f9921c"/><path d="M3 11q-4-1-2-5 2-2 3-1Q5 0 9 1t4 4q4 1 2 5-2 2-4 1z" fill="#a9c5ef"/><path d="M14 28q-4-2-1-5.500l3-1q1-4 5-3.500t5 4q5 0 4 4.500-1 2-4 2z" fill="#bcd3f6" stroke="#8fb0e6" stroke-width=".6"/><circle cx="22.500" cy="8" r="7.500" fill="#c72b22"/><text x="22.500" y="12.200" font-size="11.500" font-weight="600" fill="#fff" text-anchor="middle" font-family="Open Sans, sans-serif">2</text></svg>
        <div class="temp">${T("28°C", 37)}${T("Cz. słonecznie", 111)}</div>
        <svg class="ic" width="31" height="1"></svg>
        <svg class="ic" width="16" height="9" viewBox="0 0 16 9"><path d="M.7 8.500L8 1.200l7.300 7.300" fill="none" stroke="#111" stroke-width="1.300"/></svg>
        <svg class="ic s2" width="20" height="18" viewBox="0 0 20 18"><path d="M.7 6h3l4-4v14l-4-4h-3z" fill="none" stroke="#111" stroke-width="1.200"/><path d="M10.500 6.500q1.500 2.500 0 5" fill="none" stroke="#111" stroke-width="1.100"/><path d="M13.500 4.500q3 4.500 0 9M16.500 2q4.500 7 0 14" fill="none" stroke="#999" stroke-width="1.100"/></svg>
        <svg class="ic s3" width="20" height="18" viewBox="0 0 20 18"><path d="M5 14.500Q1 14 1 10.500T5 7Q6 3 10 3t5 4q4 0 4 3.800T15 14.500z" fill="#b8b8b8" stroke="#111" stroke-width="1.300"/><path d="M3 .5l15 17" stroke="#111" stroke-width="1.500"/></svg>
        <svg class="ic s3" width="20" height="18" viewBox="0 0 20 18"><path d="M5 14.500Q1 14 1 10.500T5 7Q6 3 10 3t5 4q4 0 4 3.800T15 14.500z" fill="#e8e8e8" stroke="#222" stroke-width="1.200"/><path d="M3 7.500Q6 3 10 3.500t4.500 4.500Q9 9 7 12z" fill="#999"/></svg>
        <svg class="ic s3" width="18" height="18" viewBox="0 0 18 18"><path d="M1.500 16.500Q2 3 16 2M5 16.500Q6 7 16 6M8.500 16.500Q9 10.500 16 10M12 16.500q1-2.500 4-3" fill="none" stroke="#111" stroke-width="1.200"/><circle cx="14.700" cy="15.500" r="1.500"/></svg>
        <svg class="ic s3" width="21" height="16" viewBox="0 0 21 16"><rect x="5.500" y="4.500" width="12.500" height="8" fill="#111"/><path d="M6.500 2.500h13v12H4M19.500 6.500h1.500v4h-1.500" fill="none" stroke="#111"/><path d="M1.500 0v3M4.500 0v3M.5 3h5v3.500h-5zM3 6.500v7" fill="none" stroke="#111" stroke-width="1.100"/></svg>
        <div class="clk">${T("12:16", 34)}${T("15.08.2025", 69)}</div>
        <svg class="ic" width="20" height="20" viewBox="0 0 20 20"><path d="M0 0h20v16.500h-7L10 20l-3-3.500H0z"/><path d="M4 4.500h12M4 8.500h12M4 12.500h8" stroke="#ddd" stroke-width="1.300"/></svg>
        <div class="edge"></div>
      </div>`;
  }
}

@customElement("app-root")
class AppRoot extends LitElement {
  static styles = css`
    :host { display: block; width: 1920px; height: 1080px; overflow: hidden; background: #f7f7f7; font-family: "Open Sans", "Noto Sans", "Noto Sans CJK JP", sans-serif; }
  `;
  render() {
    return html`<browser-chrome></browser-chrome><admin-page></admin-page><task-bar></task-bar>`;
  }
}
